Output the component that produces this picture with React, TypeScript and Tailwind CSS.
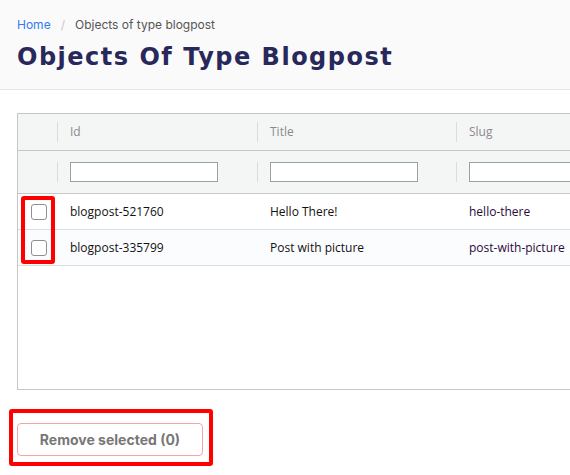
import React from "react";

const ROWS = [
  { id: "blogpost-521760", title: "Hello There!", slug: "hello-there" },
  { id: "blogpost-335799", title: "Post with picture", slug: "post-with-picture" },
];

const COLS = ["Id", "Title", "Slug"];

function HeadCell({ children, first }: { children?: React.ReactNode; first?: boolean }) {
  return (
    <div className="flex h-full items-center">
      {!first && <span className="h-5 w-px bg-[#d9dcdc]" />}
      <div className="flex-1 pl-3">{children}</div>
    </div>
  );
}

export default function App() {
  return (
    <div className="h-[475px] w-[570px] overflow-hidden bg-white font-['Open_Sans',sans-serif]">
      <header className="border-b border-[#e6e6e6] bg-[#fafafa] px-[17px] pt-[17px] pb-[17px]">
        <nav className="flex items-center gap-[10px] font-['Inter',sans-serif] text-[12px] leading-[16px]">
          <a className="text-[#2f7cf6]" href="#">Home</a>
          <span className="text-[#c8c8c8]">/</span>
          <span className="text-[#555]">Objects of type blogpost</span>
        </nav>
        <h1 className="mt-[9px] font-['DejaVu_Sans',sans-serif] text-[24px] leading-[30px] font-bold tracking-[1.5px] text-[#28285a]">
          Objects Of Type Blogpost
        </h1>
      </header>

      <div className="px-[17px] pt-[23px]">
        <div className="h-[277px] w-[700px] border border-[#c3c7c7]">
          <div className="grid h-[37px] grid-cols-[39px_200px_199px_1fr] border-b border-[#c3c7c7] bg-[#f4f6f6] text-[12px] text-[#8a8a8a]">
            <div />
            {COLS.map((c) => (
              <HeadCell key={c}>{c}</HeadCell>
            ))}
          </div>
          <div className="grid h-[43px] grid-cols-[39px_200px_199px_1fr] border-b border-[#c3c7c7] bg-[#f4f6f6]">
            <div />
            {COLS.map((c) => (
              <HeadCell key={c}>
                <input
                  type="text"
                  aria-label={`Filter ${c}`}
                  className="h-[20px] w-[148px] border border-[#95a3a3] bg-white outline-none"
                />
              </HeadCell>
            ))}
          </div>
          <div className="relative">
            {ROWS.map((r, i) => (
              <div
                key={r.id}
                className={`grid h-[36px] grid-cols-[39px_200px_199px_1fr] items-center border-b border-[#dedede] text-[12px] text-[#111] ${
                  i % 2 ? "bg-[#fbfcfe]" : "bg-white"
                }`}
              >
                <div className="flex justify-center pl-[2px]">
                  <span className="block h-[16px] w-[16px] rounded-[3px] border border-[#8f8f8f] bg-white" />
                </div>
                <div className="pl-[13px]">{r.id}</div>
                <div className="pl-[13px]">{r.title}</div>
                <div className="pl-[13px] text-[#2a0a3a]">{r.slug}</div>
              </div>
            ))}
            <div className="pointer-events-none absolute top-[2px] left-[3px] h-[68px] w-[34px] rounded-[3px] border-[4px] border-[#ff0000]" />
          </div>
        </div>

        <div className="relative mt-[33px]">
          <button
            type="button"
            disabled
            className="h-[33px] w-[186px] rounded-[4px] border border-[#f8a3a3] bg-white font-['Inter',sans-serif] text-[14px] font-bold text-[#777]"
          >
            Remove selected (0)
          </button>
          <div className="pointer-events-none absolute top-[-14px] left-[-8px] h-[57px] w-[204px] rounded-[3px] border-[4px] border-[#ff0000]" />
        </div>
      </div>
    </div>
  );
}
